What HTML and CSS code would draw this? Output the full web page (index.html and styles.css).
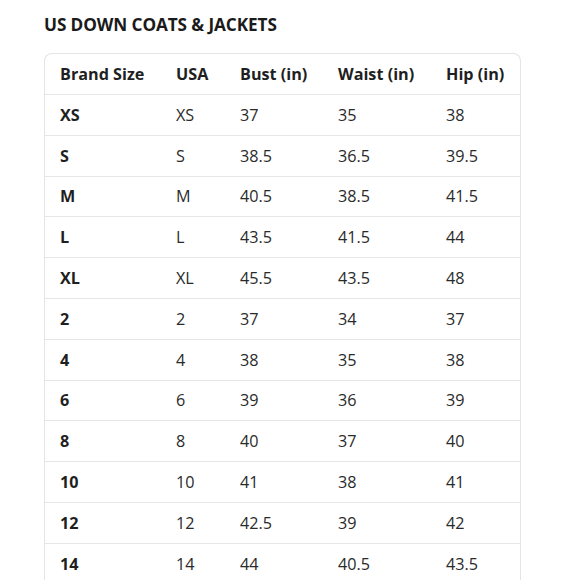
FILE: index.html
```html
<!DOCTYPE html>
<html>
<head>
<meta charset="utf-8">
<link rel="stylesheet" href="styles.css">
</head>
<body>
<div class="page">
  <h1 class="title">US DOWN COATS &amp; JACKETS</h1>
  <div class="chart">
    <div class="row head">
      <div>Brand Size</div><div>USA</div><div>Bust (in)</div><div>Waist (in)</div><div>Hip (in)</div>
    </div>
    <div class="row"><div class="b">XS</div><div>XS</div><div>37</div><div>35</div><div>38</div></div>
    <div class="row"><div class="b">S</div><div>S</div><div>38.5</div><div>36.5</div><div>39.5</div></div>
    <div class="row"><div class="b">M</div><div>M</div><div>40.5</div><div>38.5</div><div>41.5</div></div>
    <div class="row"><div class="b">L</div><div>L</div><div>43.5</div><div>41.5</div><div>44</div></div>
    <div class="row"><div class="b">XL</div><div>XL</div><div>45.5</div><div>43.5</div><div>48</div></div>
    <div class="row"><div class="b">2</div><div>2</div><div>37</div><div>34</div><div>37</div></div>
    <div class="row"><div class="b">4</div><div>4</div><div>38</div><div>35</div><div>38</div></div>
    <div class="row"><div class="b">6</div><div>6</div><div>39</div><div>36</div><div>39</div></div>
    <div class="row"><div class="b">8</div><div>8</div><div>40</div><div>37</div><div>40</div></div>
    <div class="row"><div class="b">10</div><div>10</div><div>41</div><div>38</div><div>41</div></div>
    <div class="row"><div class="b">12</div><div>12</div><div>42.5</div><div>39</div><div>42</div></div>
    <div class="row"><div class="b">14</div><div>14</div><div>44</div><div>40.5</div><div>43.5</div></div>
  </div>
</div>
</body>
</html>
```
FILE: styles.css
```css
html, body {
  margin: 0;
  padding: 0;
  background: #fff;
}
body {
  font-family: "Open Sans", "Noto Sans", sans-serif;
  color: #1f1f1f;
  overflow: hidden;
  height: 580px;
}
.page {
  padding: 13px 0 0 44px;
  width: 477px;
}
.title {
  margin: 0 0 17px 0;
  font-size: 17.2px;
  font-weight: 700;
  line-height: 23px;
  letter-spacing: -0.1px;
  color: #1a1a1a;
}
.chart {
  border: 1px solid #e4e4e4;
  border-bottom: none;
  border-radius: 8px 8px 0 0;
  padding-bottom: 40px;
}
.row {
  display: grid;
  grid-template-columns: 116px 64px 98px 108px 1fr;
  height: 39.8px;
  align-items: center;
  border-top: 1px solid #e6e6e6;
  font-size: 16.2px;
  color: #2a2a2a;
}
.row.head {
  border-top: none;
  height: 40px;
  font-weight: 700;
  color: #1f1f1f;
}
.row > div {
  padding-left: 15px;
  white-space: nowrap;
}
.row .b {
  font-weight: 700;
  color: #1f1f1f;
}
```
